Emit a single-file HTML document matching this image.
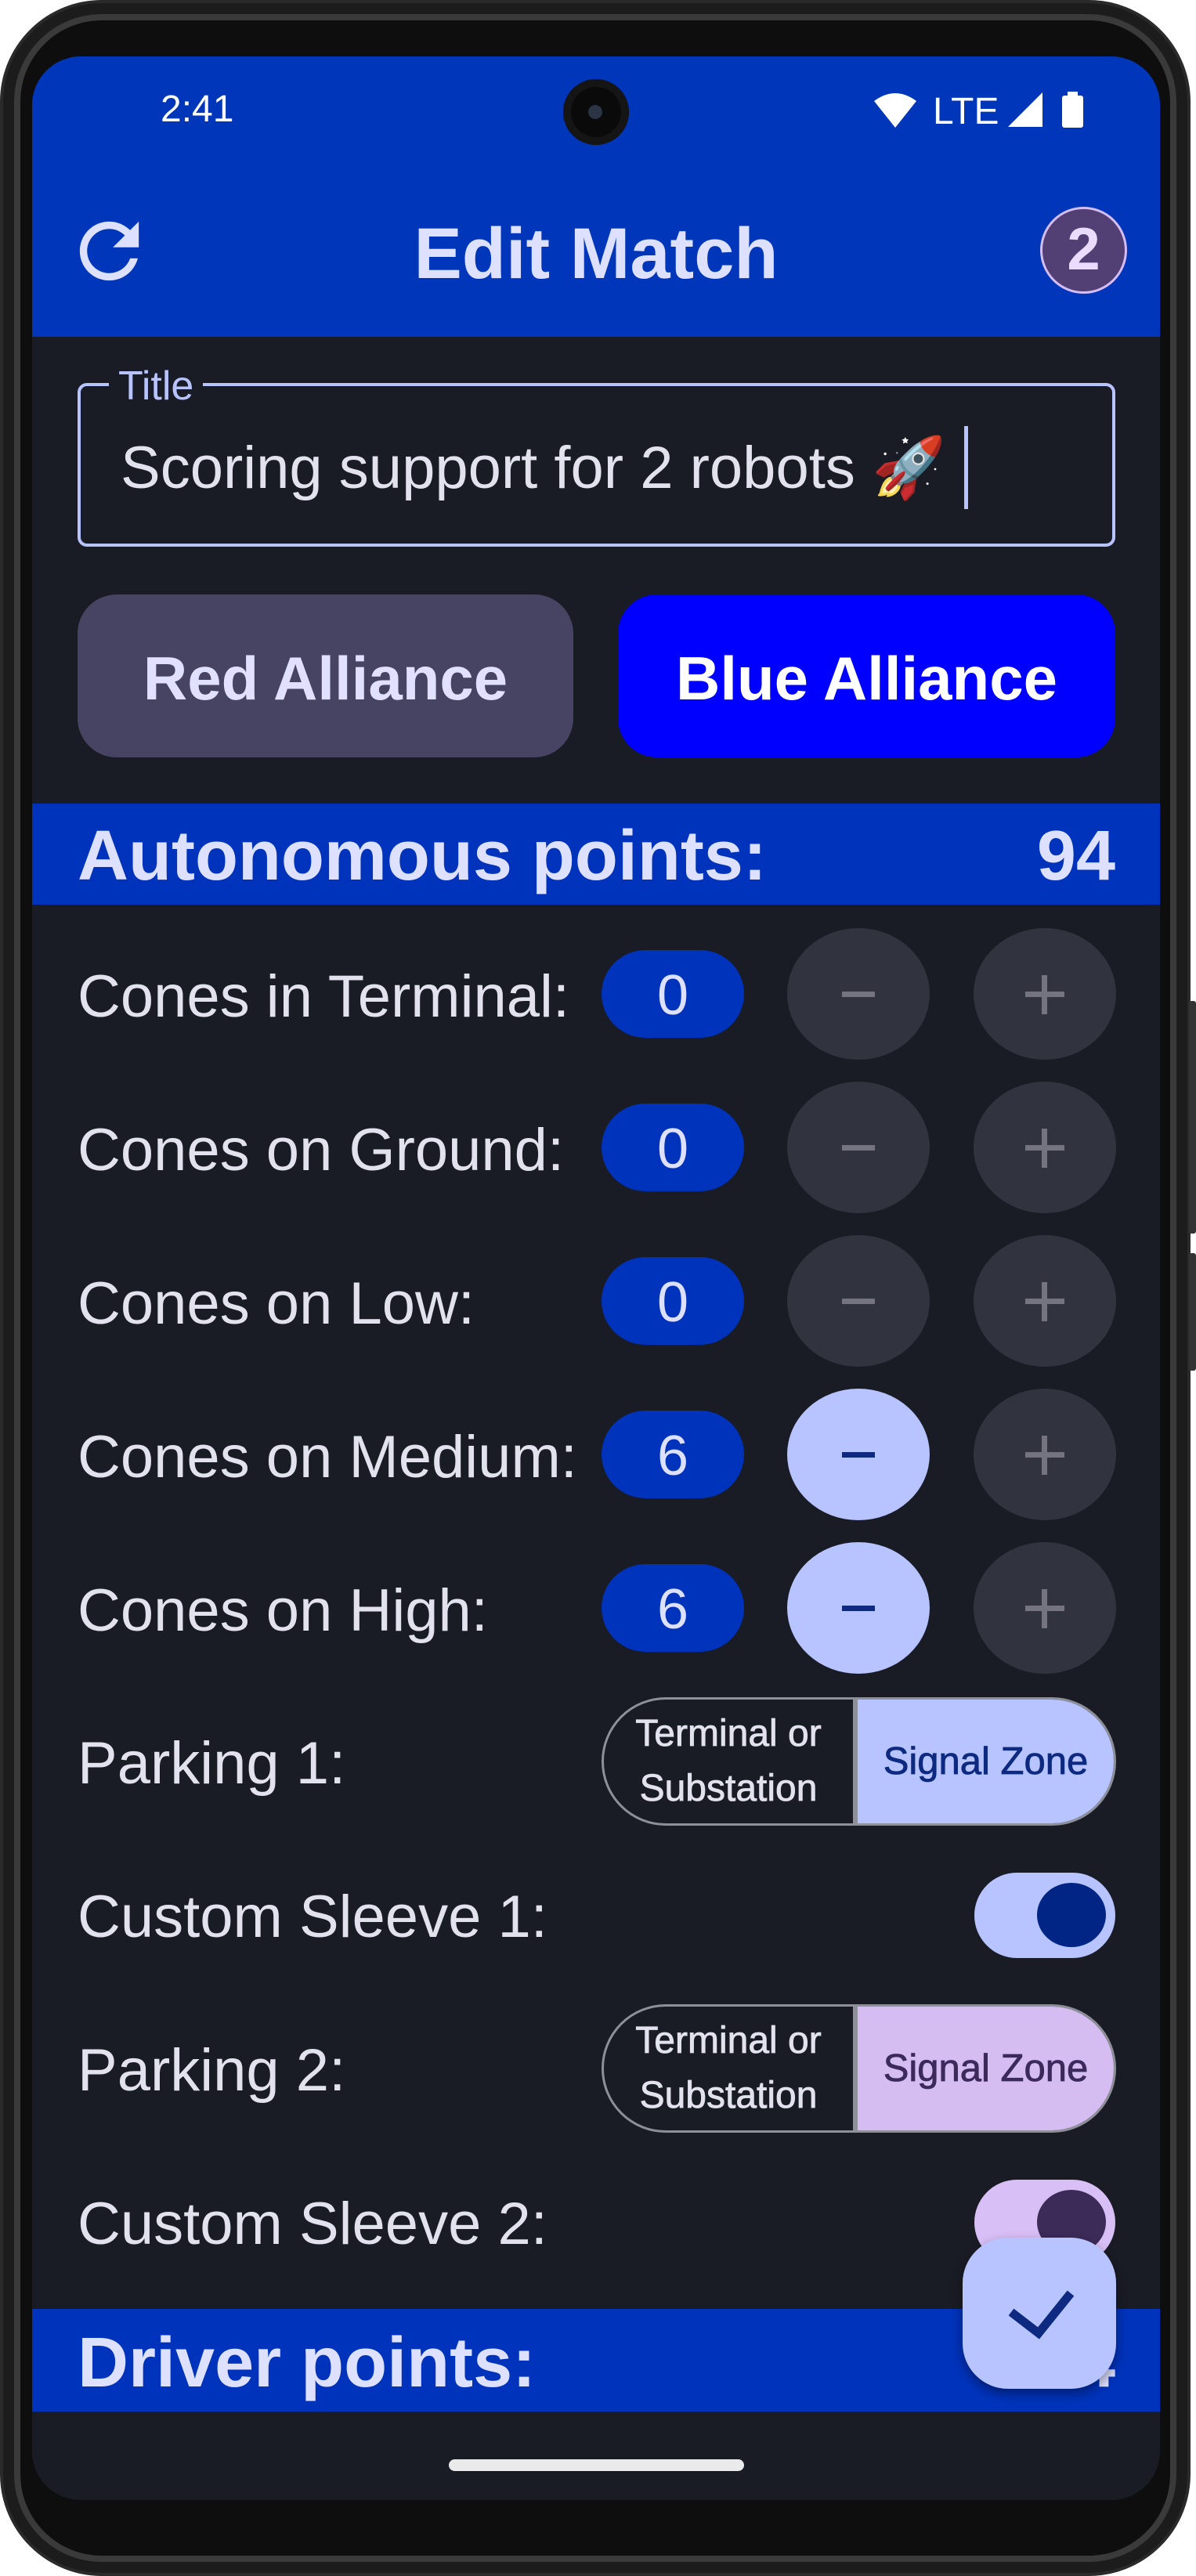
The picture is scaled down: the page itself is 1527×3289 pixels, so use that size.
<!DOCTYPE html>
<html><head><meta charset="utf-8"><style>
*{margin:0;padding:0;box-sizing:border-box}
body{width:1527px;height:3289px;background:#fff;position:relative;overflow:hidden;font-family:"Liberation Sans","Noto Sans CJK JP",sans-serif}
.a{position:absolute}
.phone{left:0;top:0;width:1520px;height:3289px;border-radius:130px;background:#0e0e0e;border:4px solid #2a2a2a;box-shadow:inset 0 0 0 14px #1c1c1c,inset 0 0 0 22px #3a3a3a}
.screen{left:41px;top:72px;width:1440px;height:3120px;border-radius:62px;background:#1a1c25;overflow:hidden}
.lbl{left:58px;color:#e2e2ee;font-size:76px;white-space:nowrap;line-height:1}
.pill{left:727px;width:182px;height:112px;border-radius:56px;background:#0033bb;color:#dde0ff;font-size:72px;text-align:center;line-height:116px}
.cb{width:182px;height:168px;border-radius:50%;background:#31333f}
.cb.on{background:#b8c4ff}
.mi{position:absolute;left:70px;top:81px;width:42px;height:7px;background:#747480}
.on .mi{background:#0d2a80}
.pv{position:absolute;left:87px;top:60px;width:7px;height:50px;background:#747480}
.ph{position:absolute;left:66px;top:81px;width:50px;height:7px;background:#747480}
.seg{left:727px;width:657px;height:164px;border:3px solid #8e9099;border-radius:82px;overflow:hidden;display:flex}
.seg .l{width:324px;color:#e2e2ee;font-size:48px;text-align:center;display:flex;align-items:center;justify-content:center;line-height:1.45;border-right:6px solid #8e9099;-webkit-text-stroke:0.8px #e2e2ee}
.seg .r{flex:1;font-size:49px;display:flex;align-items:center;justify-content:center;-webkit-text-stroke:0.8px currentColor}
.band{left:0;width:1440px;background:#0033bb;color:#dde0ff;font-weight:bold;font-size:90px;line-height:1}
</style></head><body>
<div class="a phone"></div>
<div class="a" style="left:1518px;top:1278px;width:9px;height:297px;background:#333;border-radius:3px"></div>
<div class="a" style="left:1518px;top:1600px;width:9px;height:150px;background:#333;border-radius:3px"></div>
<div class="a screen">
  <div class="a" style="left:0;top:0;width:1440px;height:358px;background:#0036b9"></div>
  <div class="a" style="left:164px;top:44px;color:#fff;font-size:48px;line-height:1">2:41</div>
  <div class="a" style="left:678px;top:29px;width:84px;height:84px;border-radius:50%;background:#0a0a0a;box-shadow:inset 0 0 0 10px #151515"></div>
  <div class="a" style="left:710px;top:62px;width:18px;height:18px;border-radius:50%;background:#2a3445"></div>
  <svg class="a" style="left:1075px;top:45px" width="54" height="46" viewBox="0 0 54 46"><path d="M0 12 Q27 -8 54 12 L27 46 Z" fill="#fff"/></svg>
  <div class="a" style="left:1150px;top:47px;color:#fff;font-size:48px;line-height:1">LTE</div>
  <svg class="a" style="left:1246px;top:46px" width="44" height="44"><path d="M0 44 L44 0 L44 44 Z" fill="#fff"/></svg>
  <div class="a" style="left:1315px;top:50px;width:27px;height:41px;background:#fff;border-radius:3px"></div>
  <div class="a" style="left:1322px;top:45px;width:13px;height:6px;background:#fff"></div>
  <svg class="a" style="left:42px;top:192px" width="113" height="113" viewBox="0 0 24 24"><path fill="#dde0ff" d="M17.65 6.35C16.2 4.9 14.21 4 12 4c-4.42 0-7.99 3.58-7.99 8s3.57 8 7.99 8c3.73 0 6.84-2.55 7.73-6h-2.08c-.82 2.33-3.04 4-5.65 4-3.31 0-6-2.69-6-6s2.69-6 6-6c1.66 0 3.14.69 4.22 1.78L13 11h7V4l-2.35 2.35z"/></svg>
  <div class="a" style="left:0;width:1440px;top:206px;text-align:center;color:#dde0ff;font-weight:bold;font-size:92px;line-height:1">Edit Match</div>
  <div class="a" style="left:1287px;top:192px;width:111px;height:111px;border-radius:50%;background:#523f73;border:3px solid #d6bdf5;color:#eadcff;font-weight:bold;font-size:76px;text-align:center;line-height:104px">2</div>

  <div class="a" style="left:58px;top:417px;width:1325px;height:209px;border:4px solid #b8c4ff;border-radius:12px"></div>
  <div class="a" style="left:98px;top:392px;padding:0 12px;background:#1a1c25;color:#b8c4ff;font-size:52px;line-height:58px">Title</div>
  <div class="a" style="left:113px;top:488px;color:#e2e2ee;font-size:76px;line-height:1;white-space:nowrap">Scoring support for 2 robots 🚀</div>
  <div class="a" style="left:1190px;top:472px;width:5px;height:106px;background:#b8c4ff"></div>

  <div class="a" style="left:58px;top:687px;width:633px;height:208px;border-radius:50px;background:#474463;color:#e2e0ff;font-weight:bold;font-size:78px;text-align:center;line-height:214px">Red Alliance</div>
  <div class="a" style="left:748px;top:687px;width:635px;height:208px;border-radius:50px;background:#0000ff;color:#fff;font-weight:bold;font-size:78px;text-align:center;line-height:214px">Blue Alliance</div>

  <div class="a band" style="top:954px;height:129px"><span class="a" style="left:58px;top:22px">Autonomous points:</span><span class="a" style="right:57px;top:22px">94</span></div>

  <div class="a lbl" style="top:1163px">Cones in Terminal:</div>
  <div class="a pill" style="top:1141px">0</div>
  <div class="a cb" style="left:964px;top:1113px"><div class="mi"></div></div>
  <div class="a cb" style="left:1202px;top:1113px"><div class="ph"></div><div class="pv"></div></div>

  <div class="a lbl" style="top:1359px">Cones on Ground:</div>
  <div class="a pill" style="top:1337px">0</div>
  <div class="a cb" style="left:964px;top:1309px"><div class="mi"></div></div>
  <div class="a cb" style="left:1202px;top:1309px"><div class="ph"></div><div class="pv"></div></div>

  <div class="a lbl" style="top:1555px">Cones on Low:</div>
  <div class="a pill" style="top:1533px">0</div>
  <div class="a cb" style="left:964px;top:1505px"><div class="mi"></div></div>
  <div class="a cb" style="left:1202px;top:1505px"><div class="ph"></div><div class="pv"></div></div>

  <div class="a lbl" style="top:1751px">Cones on Medium:</div>
  <div class="a pill" style="top:1729px">6</div>
  <div class="a cb on" style="left:964px;top:1701px"><div class="mi"></div></div>
  <div class="a cb" style="left:1202px;top:1701px"><div class="ph"></div><div class="pv"></div></div>

  <div class="a lbl" style="top:1947px">Cones on High:</div>
  <div class="a pill" style="top:1925px">6</div>
  <div class="a cb on" style="left:964px;top:1897px"><div class="mi"></div></div>
  <div class="a cb" style="left:1202px;top:1897px"><div class="ph"></div><div class="pv"></div></div>

  <div class="a lbl" style="top:2142px">Parking 1:</div>
  <div class="a seg" style="top:2095px"><div class="l">Terminal or<br>Substation</div><div class="r" style="background:#b8c4ff;color:#0d2a80">Signal Zone</div></div>

  <div class="a lbl" style="top:2338px">Custom Sleeve 1:</div>
  <div class="a" style="left:1203px;top:2319px;width:180px;height:109px;border-radius:55px;background:#b8c4ff"></div>
  <div class="a" style="left:1283px;top:2332px;width:88px;height:82px;border-radius:50%;background:#002585"></div>

  <div class="a lbl" style="top:2534px">Parking 2:</div>
  <div class="a seg" style="top:2487px"><div class="l">Terminal or<br>Substation</div><div class="r" style="background:#d5bdf2;color:#3b2a5a">Signal Zone</div></div>

  <div class="a lbl" style="top:2730px">Custom Sleeve 2:</div>
  <div class="a" style="left:1203px;top:2711px;width:180px;height:109px;border-radius:55px;background:#d8bff5"></div>
  <div class="a" style="left:1283px;top:2724px;width:88px;height:82px;border-radius:50%;background:#3c2a58"></div>

  <div class="a band" style="top:2876px;height:131px"><span class="a" style="left:58px;top:24px">Driver points:</span><span class="a" style="right:57px;top:24px">54</span></div>

  <div class="a" style="left:1188px;top:2785px;width:196px;height:193px;border-radius:58px;background:#b8c4ff;box-shadow:0 6px 14px rgba(0,0,0,.4)"></div>
  <svg class="a" style="left:0;top:0" width="1440" height="3120"><path d="M1250 2880 L1285 2907 L1326 2856" fill="none" stroke="#0d2a80" stroke-width="11"/></svg>

  <div class="a" style="left:532px;top:3068px;width:377px;height:15px;border-radius:8px;background:#eaeaea"></div>
</div>
</body></html>
